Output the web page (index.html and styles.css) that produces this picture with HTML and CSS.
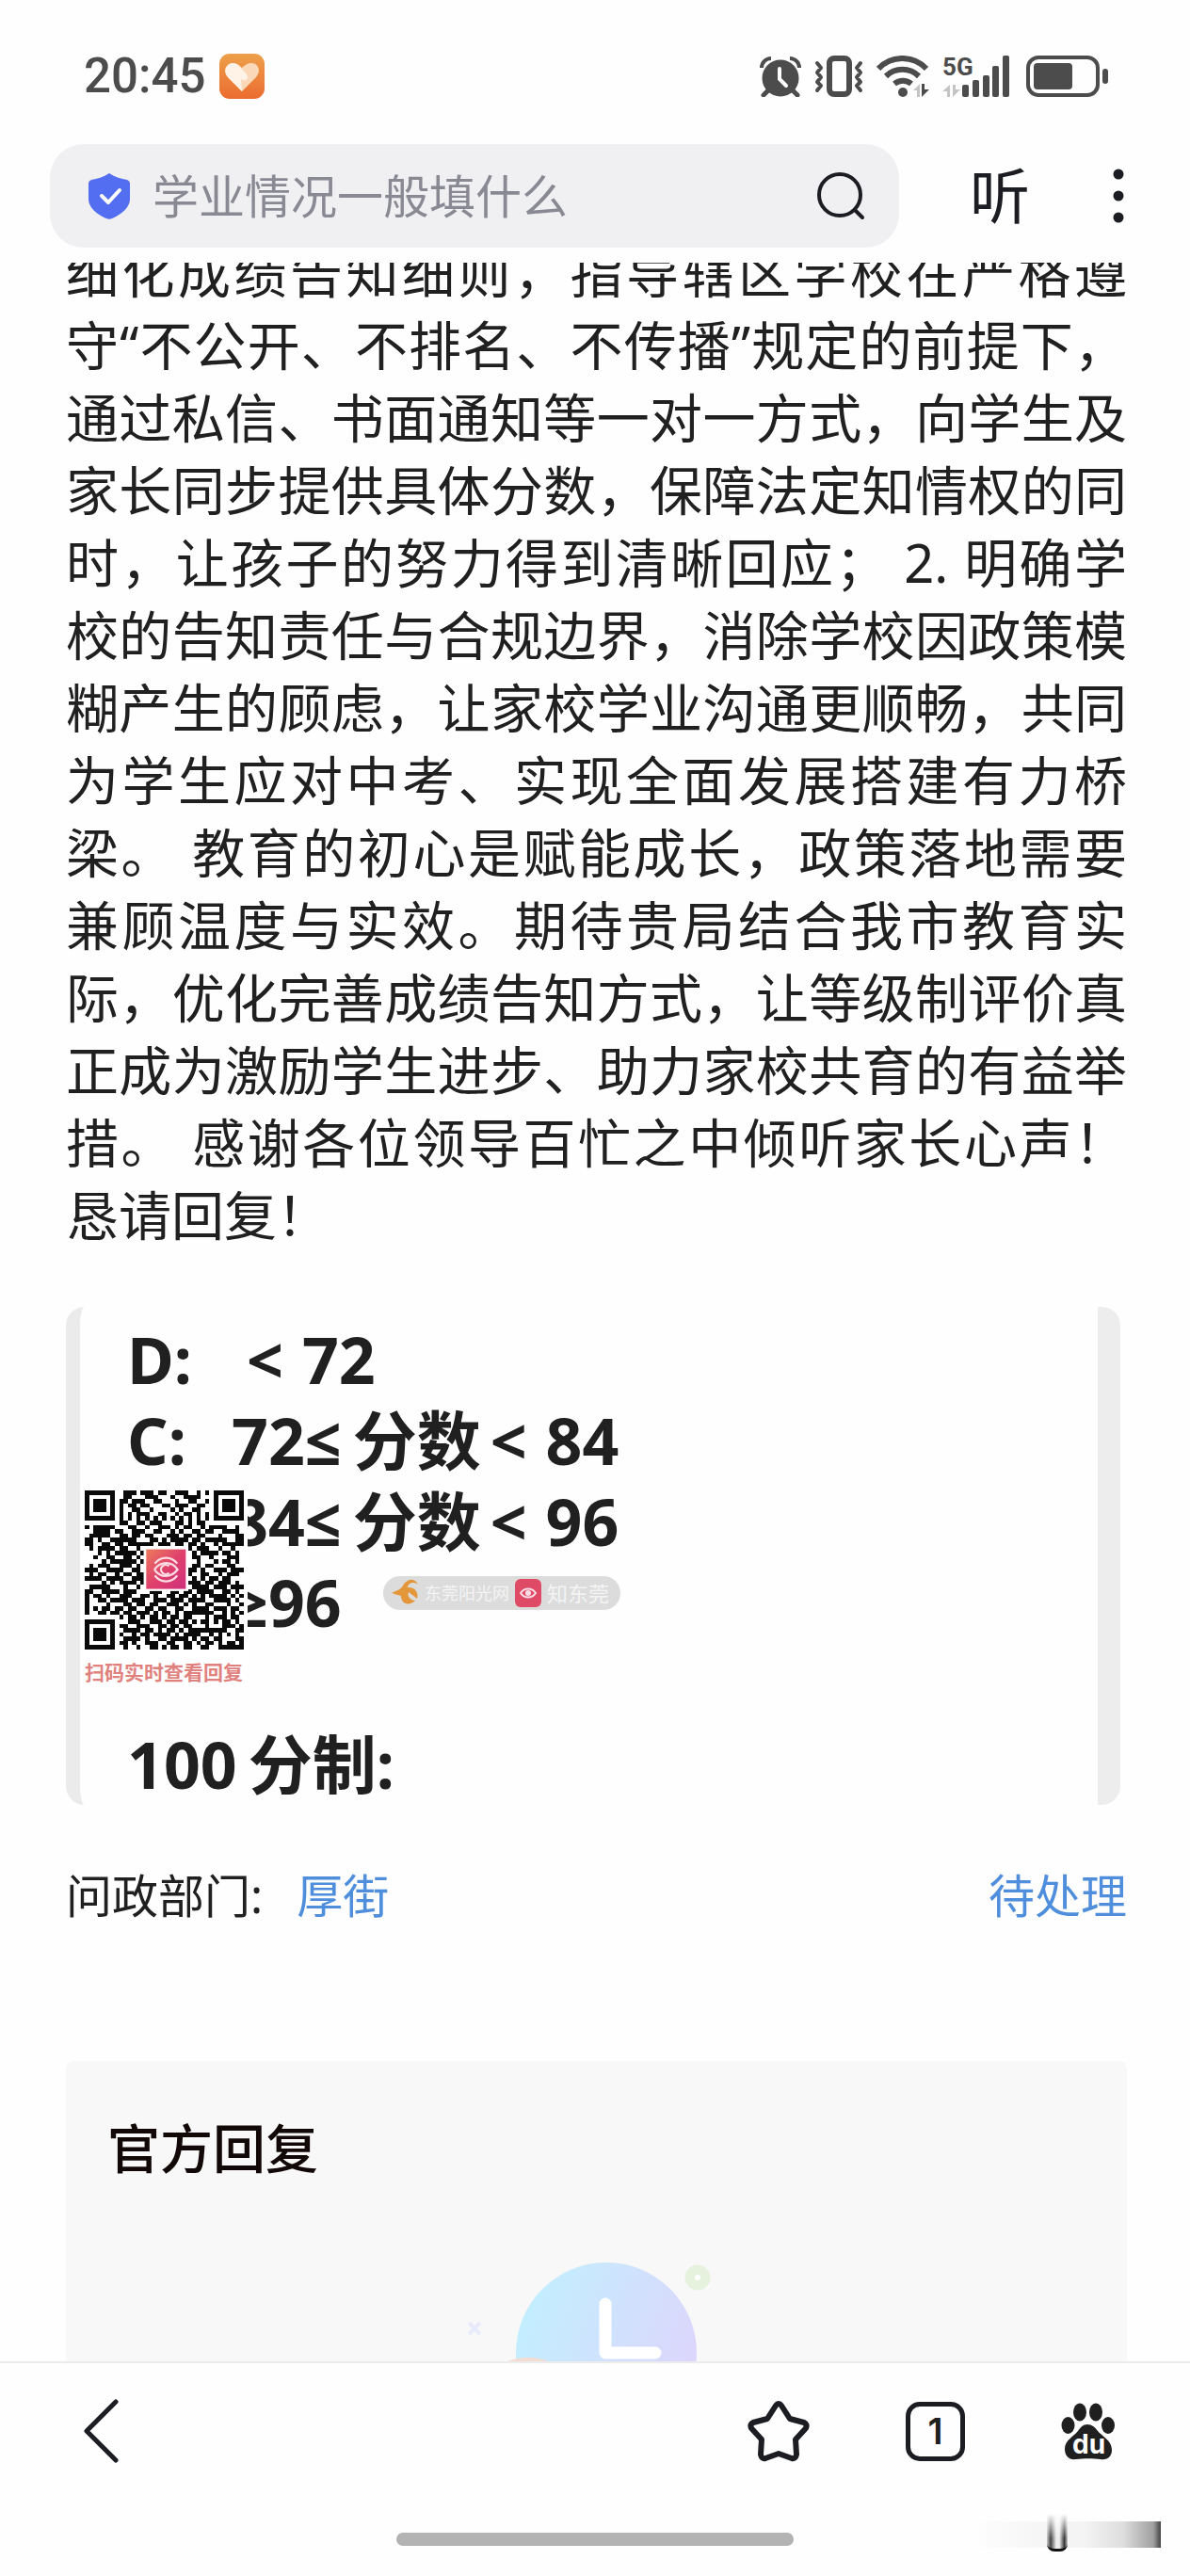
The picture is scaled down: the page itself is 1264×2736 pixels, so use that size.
FILE: index.html
```html
<!DOCTYPE html>
<html lang="zh-CN">
<head>
<meta charset="utf-8">
<meta name="viewport" content="width=device-width, initial-scale=1">
<title>问政</title>
<link rel="stylesheet" href="styles.css">
</head>
<body>
<header class="top">
  <div class="status">
    <div class="status-left">
      <time class="clock">20:45</time>
      <svg class="heart" viewBox="0 0 48 48" aria-hidden="true">
        <defs><linearGradient id="hg" x1="0" y1="0" x2="0" y2="1"><stop offset="0" stop-color="#eda04a"/><stop offset="1" stop-color="#ec6c30"/></linearGradient></defs>
        <rect width="48" height="48" rx="11" fill="url(#hg)"/>
        <path d="M24 40 9 25C3 18 8 10 14 10c4 0 7 2 10 5 3-3 6-5 10-5 7 0 11 8 5 15z" fill="#fbd9b8"/>
        <path d="M24 40 9 25C3 18 8 10 14 10c3 0 5 1 7 3l8 9c4 6-3 8-6 5z" fill="#fff3e8"/>
      </svg>
    </div>
    <div class="status-right" aria-hidden="true">
      <svg width="44" height="44" viewBox="0 0 44 44">
        <path d="M2 13A10 10 0 0 1 12 3M42 13A10 10 0 0 0 32 3" fill="none" stroke="#4c4c4c" stroke-width="4"/>
        <circle cx="22" cy="24" r="19.500" fill="#4c4c4c"/>
        <path d="M9 37l-5 5M35 37l5 5" stroke="#4c4c4c" stroke-width="5" stroke-linecap="round"/>
        <path d="M21 14v11l7 7" fill="none" stroke="#fff" stroke-width="4" stroke-linecap="round"/>
      </svg>
      <svg width="52" height="44" viewBox="0 0 52 44" fill="none" stroke="#4c4c4c">
        <rect x="16" y="3" width="21" height="38" rx="5" stroke-width="6"/>
        <path d="M3 8l4 5-4 5 4 5-4 5 4 4-4 5M49 8l-4 5 4 5-4 5 4 5-4 4 4 5" stroke-width="4" stroke-linecap="round" stroke-linejoin="round"/>
      </svg>
      <svg width="56" height="44" viewBox="0 0 56 44">
        <g fill="none" stroke="#4c4c4c" stroke-width="6">
          <path d="M2 14a35 35 0 0 1 51 0"/><path d="M10 22a25 25 0 0 1 35 0"/><path d="M19 30a14 14 0 0 1 18 0"/>
        </g>
        <circle cx="28" cy="39" r="5" fill="#4c4c4c"/>
        <path d="M46 30v14h-3v-7h-4z" fill="#c4c4c4"/><path d="M48 30h3v6h5l-8 8z" fill="#4c4c4c"/>
      </svg>
      <svg width="75" height="44" viewBox="0 0 75 44" fill="#4c4c4c">
        <text class="net" x="0" y="21">5G</text>
        <path d="M8 31v13H5v-6H0zM11 31h3v5h5l-8 8z" fill="#c4c4c4"/>
        <rect x="21" y="31" width="7" height="13" rx="2"/><rect x="32" y="26" width="7" height="18" rx="2"/><rect x="43" y="21" width="7" height="23" rx="2"/><rect x="53" y="11" width="7" height="33" rx="2"/><rect x="64" y="0" width="7" height="44" rx="2"/>
      </svg>
      <svg width="88" height="44" viewBox="0 0 88 44" fill="#4c4c4c">
        <rect x="2" y="2" width="74" height="40" rx="11" fill="none" stroke="#4c4c4c" stroke-width="4"/>
        <rect x="8" y="8" width="41" height="28" rx="4"/><rect x="81" y="14" width="6" height="16" rx="3"/>
      </svg>
    </div>
  </div>
  <div class="bar">
    <form class="search" role="search">
      <svg class="shield" viewBox="0 0 46 50" aria-hidden="true">
        <path d="M23 1c6 4 13 6 19 7 2 1 3 2 3 4v16c0 11-12 18-19 21-2 1-4 1-6 0C13 46 1 39 1 28V12c0-2 1-3 3-4 6-1 13-3 19-7z" fill="#536ef0"/>
        <path d="M15 25l7 7 12-13" fill="none" stroke="#fff" stroke-width="4" stroke-linecap="round" stroke-linejoin="round"/>
      </svg>
      <input class="query" type="text" placeholder="学业情况一般填什么" aria-label="搜索">
      <button class="icon-btn" type="button" aria-label="搜索">
        <svg width="52" height="52" viewBox="0 0 52 52" fill="none" stroke="#1c1d22" stroke-width="4" stroke-linecap="round"><circle cx="25" cy="25" r="22"/><path d="M41 41l8 8"/></svg>
      </button>
    </form>
    <button class="listen" type="button">听</button>
    <button class="icon-btn more" type="button" aria-label="更多">
      <svg width="12" height="60" viewBox="0 0 12 60" fill="#1c1d22"><circle cx="6" cy="7" r="5.500"/><circle cx="6" cy="30" r="5.500"/><circle cx="6" cy="53" r="5.500"/></svg>
    </button>
  </div>
</header>

<main class="view">
  <article class="post">
    <p class="text">
      <span class="line">细化成绩告知细则，指导辖区学校在严格遵</span>
      <span class="line">守“不公开、不排名、不传播”规定的前提下，</span>
      <span class="line">通过私信、书面通知等一对一方式，向学生及</span>
      <span class="line">家长同步提供具体分数，保障法定知情权的同</span>
      <span class="line">时，让孩子的努力得到清晰回应； 2. 明确学</span>
      <span class="line">校的告知责任与合规边界，消除学校因政策模</span>
      <span class="line">糊产生的顾虑，让家校学业沟通更顺畅，共同</span>
      <span class="line">为学生应对中考、实现全面发展搭建有力桥</span>
      <span class="line">梁。 教育的初心是赋能成长，政策落地需要</span>
      <span class="line">兼顾温度与实效。期待贵局结合我市教育实</span>
      <span class="line">际，优化完善成绩告知方式，让等级制评价真</span>
      <span class="line">正成为激励学生进步、助力家校共育的有益举</span>
      <span class="line">措。 感谢各位领导百忙之中倾听家长心声！</span>
      <span class="line last">恳请回复！</span>
    </p>

    <figure class="photo">
      <div class="grade"><span class="key">D:</span><span class="lt">&lt;</span><span>72</span></div>
      <div class="grade"><span class="key">C:</span><span>72</span><span class="op">≤</span><span class="word">分数</span><span class="lt">&lt;</span><span>84</span></div>
      <div class="grade"><span class="key"></span><span>84</span><span class="op">≤</span><span class="word">分数</span><span class="lt">&lt;</span><span>96</span></div>
      <div class="grade"><span class="key"></span><span class="op">≥</span><span>96</span></div>
      <div class="grade"></div>
      <div class="grade"><span>100</span><span class="word">分制:</span></div>
      <figcaption class="scan">
        <svg class="qr" viewBox="0 0 37 37" aria-hidden="true">
          <defs><linearGradient id="qg" x1="0" y1="0" x2="1" y2="1"><stop offset="0" stop-color="#ec7a5c"/><stop offset=".5" stop-color="#e0416c"/><stop offset="1" stop-color="#cf2f7c"/></linearGradient></defs>
          <path id="modules" fill="#0a0a0a" shape-rendering="crispEdges"/>
          <rect x="13.700" y="13.200" width="10.400" height="10.200" fill="#fff"/>
          <rect x="14.300" y="13.700" width="9.200" height="9.200" fill="url(#qg)"/>
          <g fill="none" stroke="#fbdde6" stroke-width=".5"><path d="M16.300 17a3.200 3.200 0 0 1 5.200 0M16.300 19.800a3.200 3.200 0 0 0 5.200 0M16.200 18.400c1.500-2 4-2 5.400 0-1.500 2-4 2-5.400 0"/><path d="M19.600 17.600a1.100 1.100 0 1 0 0 1.600"/></g>
        </svg>
        <span class="scan-text">扫码实时查看回复</span>
      </figcaption>
      <div class="mark">
        <svg width="30" height="32" viewBox="0 0 30 32" aria-hidden="true"><path d="M1 16c6-3 10-4 12-8C17 1 25-1 29 7c-5-4-11-1-11 3 8-1 12 6 10 12l-9-7c-2 5 3 9 7 9-6 6-15 4-15-5-4-1-7-2-10-3z" fill="#e3973a"/></svg>
        <span class="mark-a">东莞阳光网</span>
        <svg width="28" height="30" viewBox="0 0 28 30" aria-hidden="true"><rect width="28" height="30" rx="6" fill="#df4a67"/><path d="M6 15c4-6 12-6 16 0-4 6-12 6-16 0z" fill="none" stroke="#fbdde6" stroke-width="2"/><circle cx="14" cy="15" r="3" fill="#fbdde6"/></svg>
        <span class="mark-b">知东莞</span>
      </div>
    </figure>

    <div class="meta">
      <span>问政部门:<a class="dept" href="#dept">厚街</a></span>
      <span class="state">待处理</span>
    </div>

    <section class="reply">
      <h2 class="reply-title">官方回复</h2>
      <svg class="pending" width="282" height="212" viewBox="0 0 282 212" aria-hidden="true">
        <defs><linearGradient id="cg" x1="0" y1=".2" x2="1" y2=".6"><stop offset="0" stop-color="#c1f0ff"/><stop offset="1" stop-color="#ddd5fb"/></linearGradient></defs>
        <circle cx="151" cy="112" r="96" fill="url(#cg)"/>
        <path d="M150 60v52h53" fill="none" stroke="#fff" stroke-width="13" stroke-linecap="round" stroke-linejoin="round"/>
        <circle cx="248" cy="32" r="13.500" fill="#e6f2de"/><circle cx="248" cy="32" r="3" fill="#fff"/>
        <path d="M5 80l12 12M17 80L5 92" stroke="#e8ecfa" stroke-width="4"/>
        <ellipse cx="68" cy="130" rx="30" ry="13" fill="#f3dcd3"/>
      </svg>
    </section>
  </article>
</main>

<footer class="bottom">
  <nav class="tools">
    <button class="icon-btn back" type="button" aria-label="返回"><svg width="40" height="68" viewBox="0 0 40 68" fill="none" stroke="#1c1d22" stroke-width="5" stroke-linecap="round" stroke-linejoin="round"><path d="M36 3L5 34l31 31"/></svg></button>
    <button class="icon-btn" type="button" aria-label="收藏"><svg width="66" height="66" viewBox="0 0 66 66" fill="none" stroke="#1c1d22" stroke-width="6" stroke-linejoin="round"><path d="M30 6q3-4 6 0l9 14 15 4q4 2 2 6L51 42l1 16q-1 5-5 4l-14-5-14 5q-4 1-5-4l1-16L4 30q-2-4 2-6l15-4z"/></svg></button>
    <button class="tab" type="button" aria-label="1 个标签页">1</button>
    <button class="icon-btn" type="button" aria-label="百度首页"><svg width="58" height="62" viewBox="0 0 58 62" fill="#1f1f20">
      <ellipse cx="20" cy="11" rx="7" ry="9.500"/><ellipse cx="37" cy="11" rx="7" ry="9.500"/><ellipse cx="7.500" cy="25" rx="7" ry="9"/><ellipse cx="50" cy="25" rx="7" ry="9"/>
      <path d="M28 24c5 0 8 3 11 7 4 5 15 10 15 20 0 9-7 11-12 10-8-1-18-1-26 0-7 1-12-3-12-11 0-9 9-13 14-19 3-4 5-7 10-7z"/>
      <text class="du" x="12" y="55">du</text>
    </svg></button>
  </nav>
  <div class="home"></div>
  <div class="smear" aria-hidden="true"><span class="smear-u"></span></div>
</footer>
<script src="qr.js"></script>
</body>
</html>
```
FILE: styles.css
```css
* { box-sizing: border-box; }

body {
  margin: 0;
  height: 100vh;
  display: flex;
  flex-direction: column;
  background: #fefefe;
  color: #202020;
  font-family: "Noto Sans", "Noto Sans CJK SC", sans-serif;
}

button, input {
  font-family: inherit;
  color: inherit;
  border: 0;
  padding: 0;
  background: none;
}

svg { display: block; flex: none; }

/* Header */
.top { flex: none; padding: 45px 68px 16px 53px; }

.status {
  display: flex;
  justify-content: space-between;
  align-items: center;
  height: 72px;
  padding: 0 18px 0 36px;
}

.status-left { display: flex; align-items: center; gap: 15px; }

.status-right { display: flex; align-items: center; gap: 14px; }

.clock {
  font: 500 51px/72px Roboto, sans-serif;
  color: #4c4c4c;
}

.heart { width: 48px; height: 48px; }

.net { font: 700 26px Roboto, sans-serif; }

.bar {
  display: flex;
  align-items: center;
  margin-top: 36px;
}

.search {
  flex: 1;
  min-width: 0;
  display: flex;
  align-items: center;
  height: 110px;
  padding: 0 36px 0 40px;
  border-radius: 36px;
  background: #f0f0f3;
}

.shield { width: 46px; height: 50px; }

.query {
  flex: 1;
  min-width: 0;
  height: 72px;
  margin-left: 23px;
  font-size: 49px;
  outline: 0;
}

.query::placeholder { color: #888993; opacity: 1; }

.icon-btn { flex: none; }

.listen {
  flex: none;
  margin-left: 75px;
  font-size: 64px;
  line-height: 72px;
  color: #1c1d22;
}

.more { margin: 0 2px 0 88px; }

/* Scrolled article */
.view { flex: 1; min-height: 0; overflow: hidden; }

.post { margin-top: -28px; padding: 0 67px 0 70px; }

.text {
  margin: 0;
  font-size: 56px;
  line-height: 77px;
}

.line {
  display: block;
  white-space: nowrap;
  text-align: justify;
  text-align-last: justify;
}

.last { text-align-last: left; }

/* Attached picture */
.photo {
  position: relative;
  margin: 59px 7px 0 0;
  padding: 13px 60px 0 50px;
  border-left: 15px solid #ebebeb;
  border-right: 24px solid #ededed;
  border-radius: 20px;
  overflow: hidden;
}

.grade {
  display: flex;
  height: 86px;
  font-size: 68px;
  font-weight: 700;
  line-height: 86px;
}

.key { width: 111px; }
.lt { margin: 0 20px 0 10px; }
.key + .lt { margin-left: 16px; }
.op { font-family: "Open Sans", "DejaVu Sans", sans-serif; }
.word { margin-left: 12px; }

.scan {
  position: absolute;
  left: 0;
  top: 192px;
  width: 178px;
  padding: 3px 0 0 5px;
  background: #fff;
}

.qr { width: 169px; height: 169px; }

.scan-text {
  display: block;
  margin-top: 8px;
  font-size: 21px;
  font-weight: 700;
  line-height: 32px;
  color: #e0817e;
}

.mark {
  position: absolute;
  left: 322px;
  top: 286px;
  display: flex;
  align-items: center;
  gap: 6px;
  width: 252px;
  height: 36px;
  padding: 0 8px;
  border-radius: 18px;
  background: #dcdcdc;
  color: #f4f4f4;
  line-height: 36px;
}

.mark-a { font-size: 18px; }
.mark-b { font-size: 22px; }

/* Department and state */
.meta {
  display: flex;
  justify-content: space-between;
  margin-top: 60px;
  font-size: 49px;
  line-height: 72px;
}

.dept, .state { color: #4f8edc; text-decoration: none; }
.dept { margin-left: 36px; }

/* Official reply */
.reply {
  margin-top: 140px;
  padding: 56px 44px 72px;
  border-radius: 8px;
  background: #f8f8f8;
}

.reply-title {
  margin: 0;
  font-size: 56px;
  font-weight: 500;
  line-height: 72px;
  color: #120808;
}

.pending { margin: 70px auto 0; }

/* Browser toolbar */
.bottom {
  position: relative;
  flex: none;
  height: 228px;
  border-top: 2px solid #ececec;
  background: #fefefe;
}

.tools {
  display: flex;
  align-items: center;
  gap: 102px;
  height: 144px;
  padding: 0 79px 0 87px;
}

.back { margin-right: auto; }

.tab {
  flex: none;
  width: 63px;
  height: 63px;
  border: 5px solid #1c1d22;
  border-radius: 15px;
  font: 600 38px/53px Inter, sans-serif;
}

.du { font: 700 28px Inter, sans-serif; fill: #fff; }

.home {
  width: 422px;
  height: 14px;
  margin: 36px auto 0;
  border-radius: 7px;
  background: #b3b3b3;
}

.smear {
  position: absolute;
  right: 31px;
  bottom: 30px;
  width: 200px;
  height: 28px;
  background: linear-gradient(90deg, #fefefe, #f6f6f6 35%, #f3f3f3 60%, #dedede 80%, #a0a0a0 96%, #444);
}

.smear-u {
  position: absolute;
  left: 79px;
  top: -8px;
  width: 22px;
  height: 40px;
  border-radius: 0 0 8px 8px;
  border-bottom: 3px solid #111;
  background: linear-gradient(180deg, #fefefe, #fefefe00 70%), linear-gradient(90deg, #ccc, #444 18%, #eee 45%, #eee 60%, #333 85%, #ccc);
}
```
FILE: qr.js
```js
// Module rows of the code, one character for each module.
const rows = [
  "1111111001110111011001110010101111111",
  "1000001001100011100010011110001000001",
  "1011101011011100110001001100101011101",
  "1011101010110110001101110011001011101",
  "1011101010011001000010100110001011101",
  "1000001010101110011001011010101000001",
  "1111111010101010101010101010101111111",
  "0000000011001101110001101011000000000",
  "1011111000110010011101011001011110010",
  "0011110110011100110010100110110011110",
  "0111110011011011000111011011000100011",
  "1101001111110001101011110110111110011",
  "1100110110111111011101101101001011111",
  "0101111011001000000000001011100100100",
  "0001010111110100000000000101111011010",
  "0010011001101000000000000110010001110",
  "0000101111110100000000000010001011010",
  "0101110011101000000000000110110001100",
  "1110011110011000000000001101001110111",
  "0101100101101100000000001001100101110",
  "1111011110011100000000000101011011000",
  "0000101011110100000000001110110111010",
  "0111110001001000000000000111101110111",
  "1100111101110001110011011011110011010",
  "1011010011100110100110110101011110101",
  "1001101111011100111011101111001111010",
  "1000010001101101100111010100110001001",
  "1010110110110011011001100111101110110",
  "1001101101101110101101011111110010101",
  "0000000010110101101011011000101110110",
  "1111111000111001110110110101101011010",
  "1000001011001110011011011000100011101",
  "1011101001111011010110101111111110011",
  "1011101010010110111101011110010101010",
  "1011101001111010011011110101101100011",
  "1000001011010011100110011010110101101",
  "1111111001001001101011011001100111111"
];

let d = "";
rows.forEach((row, y) => {
  [...row].forEach((cell, x) => {
    if (cell === "1") d += `M${x} ${y}h1v1h-1z`;
  });
});
document.getElementById("modules").setAttribute("d", d);
```
